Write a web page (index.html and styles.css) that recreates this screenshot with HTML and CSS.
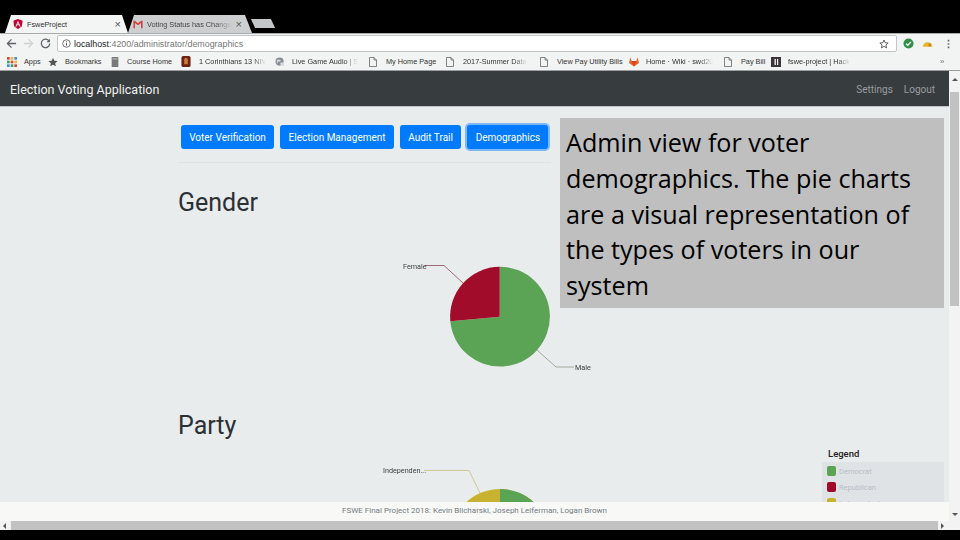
FILE: index.html
```html
<!doctype html>
<html>
  <head>
    <title>FsweProject</title>
    <link rel="stylesheet" href="styles.css">
  </head>
  <body>
    <div class="screen">
      <div class="tabstrip">
        <div class="tab tab-active">
          <svg class="tab-icon" viewBox="0 0 12 12"><path d="M6 0 .5 2 1.400 9 6 12l4.600-3 .9-7z" fill="#c3002f"/><path d="M6 2 2.800 9.200H4l.7-1.600h2.600L8 9.200h1.200zM5.100 6.700 6 4.500l.9 2.200z" fill="#fff"/></svg>
          <span class="tab-title">FsweProject</span>
          <span class="tab-close">×</span>
        </div>
        <div class="tab tab-idle">
          <svg class="tab-icon" viewBox="0 0 12 10"><path d="M.5 1h1.700L6 4l3.800-3h1.700v9H9.600V3.800L6 6.600 2.400 3.800V10H.5z" fill="#d0433a"/></svg>
          <span class="tab-title bm-fade">Voting Status has Change</span>
          <span class="tab-close">×</span>
        </div>
        <div class="tab-new"></div>
      </div>

      <div class="toolbar">
        <svg class="nav-btn" viewBox="0 0 12 12"><path d="M11 6H2M6 1.500 1.500 6 6 10.500" fill="none" stroke="#5f6368" stroke-width="1.400"/></svg>
        <svg class="nav-btn" viewBox="0 0 12 12"><path d="M1 6h9M6 1.500 10.500 6 6 10.500" fill="none" stroke="#cfd1d3" stroke-width="1.400"/></svg>
        <svg class="nav-btn" viewBox="0 0 12 12"><path d="M10 3.600A4.600 4.600 0 1 0 10.600 6" fill="none" stroke="#5f6368" stroke-width="1.400"/><path d="M10.800 .8v3.800H7z" fill="#5f6368"/></svg>
        <div class="omnibox">
          <svg class="omni-info" viewBox="0 0 10 10"><circle cx="5" cy="5" r="4.200" fill="none" stroke="#555" stroke-width=".9"/><path d="M4.500 4.400h1v3h-1zM4.500 2.500h1v1h-1z" fill="#555"/></svg>
          <span class="url"><b>localhost</b>:4200/administrator/demographics</span>
          <svg class="omni-star" viewBox="0 0 12 12"><path d="M6 1.200 7.400 4.500l3.600.3-2.700 2.400.8 3.500L6 8.800 2.900 10.700l.8-3.500L1 4.800l3.600-.3z" fill="none" stroke="#444" stroke-width="1"/></svg>
        </div>
        <svg class="ext ext-check" viewBox="0 0 12 12"><circle cx="6" cy="6" r="5.500" fill="#2f8f46"/><path d="M3.300 6.200 5.200 8 8.800 4.200" fill="none" stroke="#fff" stroke-width="1.500"/></svg>
        <svg class="ext ext-gauge" viewBox="0 0 12 12"><path d="M1 9.500a5 5 0 0 1 10 0z" fill="#e5b62c"/><circle cx="8.500" cy="7.500" r="1.800" fill="#c98a1d"/></svg>
        <svg class="menu-dots" viewBox="0 0 3 12"><path d="M.5 1h2v2h-2zM.5 5h2v2h-2zM.5 9h2v2h-2z" fill="#666"/></svg>
      </div>

      <div class="bookmarks">
        <div class="bm bm-apps">
          <svg class="bm-icon" viewBox="0 0 9 9"><path d="M0 0h2.400v2.400H0z" fill="#d9463a"/><path d="M3.300 0h2.400v2.400H3.300z" fill="#e8b62f"/><path d="M6.600 0H9v2.400H6.600z" fill="#3f8fe0"/><path d="M0 3.300h2.400v2.400H0z" fill="#3f9f5a"/><path d="M3.300 3.300h2.400v2.400H3.300z" fill="#d9463a"/><path d="M6.600 3.300H9v2.400H6.600z" fill="#e8b62f"/><path d="M0 6.600h2.400V9H0z" fill="#3f8fe0"/><path d="M3.300 6.600h2.400V9H3.300z" fill="#3f9f5a"/><path d="M6.600 6.600H9V9H6.600z" fill="#d9463a"/></svg>
          <span class="bm-label">Apps</span>
        </div>
        <div class="bm bm-marks">
          <svg class="bm-icon" viewBox="0 0 12 12"><path d="M6 .8 7.600 4.400l3.900.4-2.900 2.600.8 3.800L6 9.300l-3.400 1.900.8-3.800L.5 4.800l3.900-.4z" fill="#555"/></svg>
          <span class="bm-label">Bookmarks</span>
        </div>
        <div class="bm bm-course">
          <svg class="bm-icon" viewBox="0 0 10 12"><path d="M1 0h8v12H1z" fill="#77797a"/><path d="M2 1.500h6v1.500H2z" fill="#b5b7b8"/></svg>
          <span class="bm-label">Course Home</span>
        </div>
        <div class="bm bm-bible">
          <svg class="bm-icon bm-icon-wide" viewBox="0 0 11 12"><path d="M.5 2q0-2 2-2h6q2 0 2 2v8q0 2-2 2h-6q-2 0-2-2z" fill="#6b2413"/><path d="M3.500 4a2 2 0 0 1 4 0v5h-4z" fill="#c9793c"/></svg>
          <span class="bm-label bm-fade">1 Corinthians 13 NIV</span>
        </div>
        <div class="bm bm-audio">
          <svg class="bm-icon" viewBox="0 0 11 11"><circle cx="5" cy="5" r="4.500" fill="#8a8f93"/><path d="M2 3h4v2H3v2H2zM6 6h4v4H6z" fill="#d9dcde"/></svg>
          <span class="bm-label bm-fade">Live Game Audio | S</span>
        </div>
        <div class="bm bm-home">
          <svg class="bm-doc" viewBox="0 0 8 10"><path d="M.5.5H5L7.500 3v6.500h-7zM5 .5V3h2.500" fill="none" stroke="#666" stroke-width=".8"/></svg>
          <span class="bm-label">My Home Page</span>
        </div>
        <div class="bm bm-summer">
          <svg class="bm-doc" viewBox="0 0 8 10"><path d="M.5.5H5L7.500 3v6.500h-7zM5 .5V3h2.500" fill="none" stroke="#666" stroke-width=".8"/></svg>
          <span class="bm-label bm-fade">2017-Summer Data</span>
        </div>
        <div class="bm bm-utility">
          <svg class="bm-doc" viewBox="0 0 8 10"><path d="M.5.5H5L7.500 3v6.500h-7zM5 .5V3h2.500" fill="none" stroke="#666" stroke-width=".8"/></svg>
          <span class="bm-label">View Pay Utility Bills</span>
        </div>
        <div class="bm bm-wiki">
          <svg class="bm-icon" viewBox="0 0 11 10"><path d="M5.500 10 0 6 1.500 0 3 4h5l1.500-4L11 6z" fill="#e2672b"/><path d="M5.500 10 3 4h5z" fill="#d9421f"/></svg>
          <span class="bm-label bm-fade">Home · Wiki · swd20</span>
        </div>
        <div class="bm bm-bill">
          <svg class="bm-doc" viewBox="0 0 8 10"><path d="M.5.5H5L7.500 3v6.500h-7zM5 .5V3h2.500" fill="none" stroke="#666" stroke-width=".8"/></svg>
          <span class="bm-label">Pay Bill</span>
        </div>
        <div class="bm bm-hack">
          <svg class="bm-icon" viewBox="0 0 10 10"><path d="M0 0h10v10H0z" fill="#3a3538"/><path d="M3.500 2h1.400v6H3.500zM6 2h1.200v6H6z" fill="#eee"/></svg>
          <span class="bm-label bm-fade">fswe-project | Hack</span>
        </div>
        <span class="bm-more">»</span>
      </div>

      <div class="viewport">
        <div class="page">
          <nav class="navbar">
            <span class="brand">Election Voting Application</span>
            <span class="nav-links"><span>Settings</span><span>Logout</span></span>
          </nav>

          <main class="content">
            <div class="btn-row">
              <button class="btn">Voter Verification</button>
              <button class="btn">Election Management</button>
              <button class="btn">Audit Trail</button>
              <button class="btn btn-focus">Demographics</button>
            </div>
            <hr class="rule">

            <h2 class="chart-title">Gender</h2>
            <svg class="chart chart-gender" viewBox="178 240 440 150">
              <path d="M499.700 316.700 450.300 321.300A49.900 49.900 0 1 0 499.700 266.800z" fill="#5aa454"/>
              <path d="M499.700 316.700V266.800A49.900 49.900 0 0 0 450.300 321.300z" fill="#a10a28"/>
              <polyline points="425,265.500 444,265.500 463,283" class="lead lead-red"/>
              <polyline points="537,350 556,367 574,367" class="lead lead-green"/>
              <text x="403" y="269" class="pie-label">Female</text>
              <text x="575" y="370" class="pie-label">Male</text>
            </svg>

            <h2 class="chart-title chart-title-party">Party</h2>
            <svg class="chart chart-party" viewBox="178 460 440 60">
              <circle cx="500" cy="539" r="50" fill="#c8b32f"/>
              <path d="M500 539V489A50 50 0 0 1 550 539z" fill="#5aa454"/>
              <polyline points="424,470.500 469,470.500 480,493" class="lead lead-yellow"/>
              <text x="383" y="473" class="pie-label">Independen...</text>
            </svg>
          </main>

          <aside class="callout">Admin view for voter demographics. The pie charts are a visual representation of the types of voters in our system</aside>

          <div class="legend">
            <div class="legend-title">Legend</div>
            <ul class="legend-list">
              <li><i class="swatch swatch-dem"></i>Democrat</li>
              <li><i class="swatch swatch-rep"></i>Republican</li>
              <li><i class="swatch swatch-ind"></i>Independent</li>
            </ul>
          </div>

          <footer class="footer">FSWE Final Project 2018: Kevin Blicharski, Joseph Leiferman, Logan Brown</footer>
        </div>

        <div class="vscroll">
          <span class="arrow-up"></span>
          <span class="vthumb"></span>
          <span class="arrow-down"></span>
        </div>
      </div>

      <div class="hscroll">
        <span class="arrow-left"></span>
        <span class="hthumb"></span>
        <span class="arrow-right"></span>
      </div>
      <div class="bottom-bar"></div>
    </div>
  </body>
</html>
```
FILE: styles.css
```css
html, body {
  margin: 0;
  padding: 0;
  background: #000;
}

.screen {
  width: 960px;
  height: 540px;
  overflow: hidden;
  display: flex;
  flex-direction: column;
  font-family: "Liberation Sans", Arial, sans-serif;
}

/* browser chrome */
.tabstrip {
  height: 33px;
  flex: none;
  display: flex;
  align-items: flex-end;
  background: #000;
  padding-left: 5px;
}

.tab {
  width: 123px;
  height: 18px;
  flex: none;
  display: flex;
  align-items: center;
  font-size: 7.300px;
  clip-path: polygon(0 100%, 6px 0, 117px 0, 100% 100%);
  padding: 0 7px 0 8px;
  box-sizing: border-box;
}

.tab-active {
  background: #f3f4f4;
  color: #333;
}

.tab-idle {
  width: 124px;
  padding: 0 10px 0 5px;
  background: #cdcecf;
  color: #444;
}

.tab-icon {
  width: 10px;
  height: 10px;
  flex: none;
  margin-right: 4px;
}

.tab-title {
  flex: 1;
  white-space: nowrap;
  overflow: hidden;
}

.tab-close {
  font-size: 11px;
  color: #555;
  margin-left: 4px;
}

.tab-new {
  width: 20px;
  height: 9px;
  margin: 0 0 5px 1px;
  background: #c4c5c6;
  transform: skewX(25deg);
}

.toolbar {
  height: 20px;
  flex: none;
  display: flex;
  align-items: center;
  background: #f2f3f3;
  border-top: 1px solid #a9aaab;
  box-sizing: border-box;
  padding-left: 6px;
}

.nav-btn {
  width: 11px;
  height: 11px;
  margin-right: 6px;
  flex: none;
}

.omnibox {
  width: 840px;
  height: 17px;
  display: flex;
  align-items: center;
  background: #fff;
  border: 1px solid #c4c5c6;
  border-radius: 2px;
  box-sizing: border-box;
  padding: 0 4px;
  flex: none;
}

.omni-info {
  width: 9px;
  height: 9px;
  margin-right: 3px;
}

.url {
  flex: 1;
  font-size: 8.900px;
  color: #777;
}

.url b {
  font-weight: normal;
  color: #222;
}

.omni-star {
  width: 10px;
  height: 10px;
  margin-right: 3px;
}

.ext {
  width: 11px;
  height: 11px;
  flex: none;
}

.ext-check {
  margin-left: 6px;
}

.ext-gauge {
  margin-left: 8px;
}

.menu-dots {
  width: 3px;
  height: 10px;
  margin-left: 14px;
  flex: none;
}

.bookmarks {
  height: 18px;
  flex: none;
  display: flex;
  align-items: center;
  background: #f2f3f3;
  border-bottom: 1px solid #9c9e9f;
  box-sizing: border-box;
  padding-left: 7px;
  font-size: 7.300px;
  color: #333;
  position: relative;
}

.bm {
  display: flex;
  align-items: center;
  gap: 7px;
  flex: none;
}

.bm-icon {
  width: 10px;
  height: 10px;
  flex: none;
}

.bm-icon-wide {
  width: 12px;
  height: 11px;
}

.bm-doc {
  width: 8px;
  height: 10px;
  flex: none;
  margin-right: 2px;
}

.bm-label {
  white-space: nowrap;
}

.bm-fade {
  -webkit-mask-image: linear-gradient(90deg, #000 80%, transparent);
  mask-image: linear-gradient(90deg, #000 80%, transparent);
}

.bm-apps { width: 41px; }
.bm-marks { width: 62px; }
.bm-course { width: 70px; }
.bm-bible { width: 95px; }
.bm-audio { width: 94px; }
.bm-home { width: 77px; }
.bm-summer { width: 94px; }
.bm-utility { width: 89px; }
.bm-wiki { width: 95px; }
.bm-bill { width: 47px; }
.bm-hack { width: 85px; }

.bm-more {
  position: absolute;
  left: 940px;
  font-size: 8px;
  color: #777;
  opacity: .99;
}

/* page */
.viewport {
  height: 450px;
  flex: none;
  display: flex;
}

.page {
  width: 949px;
  height: 450px;
  flex: none;
  position: relative;
  overflow: hidden;
  background: #e9eced;
  font-family: Roboto, sans-serif;
}

.navbar {
  height: 36px;
  display: flex;
  align-items: center;
  justify-content: space-between;
  box-sizing: border-box;
  padding: 1px 14px 0 10px;
  background: #373c3e;
  border-bottom: 1px solid #bfc3c6;
}

.brand {
  font-size: 12.500px;
  color: #f1f1f1;
}

.nav-links {
  display: flex;
  gap: 11px;
  font-size: 10px;
  color: #9a9da0;
}

.content {
  margin-left: 178px;
  width: 373px;
  padding-top: 18px;
}

.btn-row {
  display: flex;
  gap: 6.300px;
  padding-left: 3px;
}

.btn {
  height: 24px;
  padding: 0 8.200px;
  border: 0;
  border-radius: 3px;
  background: #007bff;
  color: #fff;
  font-family: Roboto, sans-serif;
  font-size: 10px;
  white-space: nowrap;
}

.btn-focus {
  box-shadow: 0 0 0 2px #7db8f7;
}

.rule {
  margin: 13px 0 0;
  border: 0;
  border-top: 1px solid #e0e3e6;
}

.chart-title {
  margin: 13px 0 0;
  font-size: 25px;
  font-weight: 400;
  line-height: 54px;
  height: 54px;
  color: #2b3035;
}

.chart-title-party {
  margin: 9px 0 0;
}

.chart {
  display: block;
  overflow: visible;
  opacity: .99;
}

.chart-gender {
  width: 440px;
  height: 150px;
  margin-top: 10px;
}

.chart-party {
  width: 440px;
  height: 60px;
  margin-top: 7px;
}

.lead {
  fill: none;
  stroke-width: .8;
}

.lead-red { stroke: #8c4558; }
.lead-green { stroke: #8d9a88; }
.lead-yellow { stroke: #c9bd78; }

.pie-label {
  font-family: Roboto, sans-serif;
  font-size: 7.200px;
  fill: #3a3a3a;
}

.callout {
  position: absolute;
  left: 560px;
  top: 47px;
  width: 384px;
  height: 190px;
  box-sizing: border-box;
  padding: 7px 6px;
  background: #bfbfbf;
  color: #000;
  font-family: "Open Sans", sans-serif;
  font-size: 25.150px;
  line-height: 35.800px;
}

.legend {
  position: absolute;
  left: 822px;
  top: 376px;
  width: 122px;
  font-size: 9.500px;
}

.legend-title {
  height: 15px;
  line-height: 13px;
  padding-left: 6px;
  font-weight: 500;
  color: #222;
}

.legend-list {
  list-style: none;
  margin: 0;
  padding: 1px 5px;
  background: #dfe3e5;
  color: #b9bdc5;
  font-size: 7.500px;
}

.legend-list li {
  height: 16px;
  display: flex;
  align-items: center;
  gap: 3px;
}

.swatch {
  width: 9px;
  height: 10px;
  border-radius: 2px;
}

.swatch-dem { background: #5aa454; }
.swatch-rep { background: #a10a28; }
.swatch-ind { background: #c7b42c; }

.footer {
  position: absolute;
  left: 0;
  right: 0;
  bottom: 0;
  height: 19px;
  line-height: 18px;
  text-align: center;
  background: #f8f9f7;
  color: #737b82;
  font-size: 8px;
}

/* scrollbars */
.vscroll {
  flex: 1;
  display: flex;
  flex-direction: column;
  align-items: center;
  background: #f3f3f3;
}

.arrow-up {
  margin-top: 7px;
  border: 3px solid transparent;
  border-top: 0;
  border-bottom: 3px solid #555;
}

.vthumb {
  width: 9px;
  height: 214px;
  margin-top: 11px;
  background: #c2c2c2;
}

.arrow-down {
  margin-top: auto;
  margin-bottom: 5px;
  border: 3px solid transparent;
  border-bottom: 0;
  border-top: 3px solid #555;
}

.hscroll {
  height: 9px;
  flex: none;
  display: flex;
  align-items: center;
  background: #f3f3f3;
}

.arrow-left {
  margin-left: 3px;
  border: 3px solid transparent;
  border-left: 0;
  border-right: 3px solid #555;
}

.hthumb {
  width: 927px;
  height: 9px;
  margin-left: 5px;
  background: #c2c2c2;
}

.arrow-right {
  margin-left: 3px;
  border: 3px solid transparent;
  border-right: 0;
  border-left: 3px solid #555;
}

.bottom-bar {
  flex: 1;
  background: #000;
}
```
